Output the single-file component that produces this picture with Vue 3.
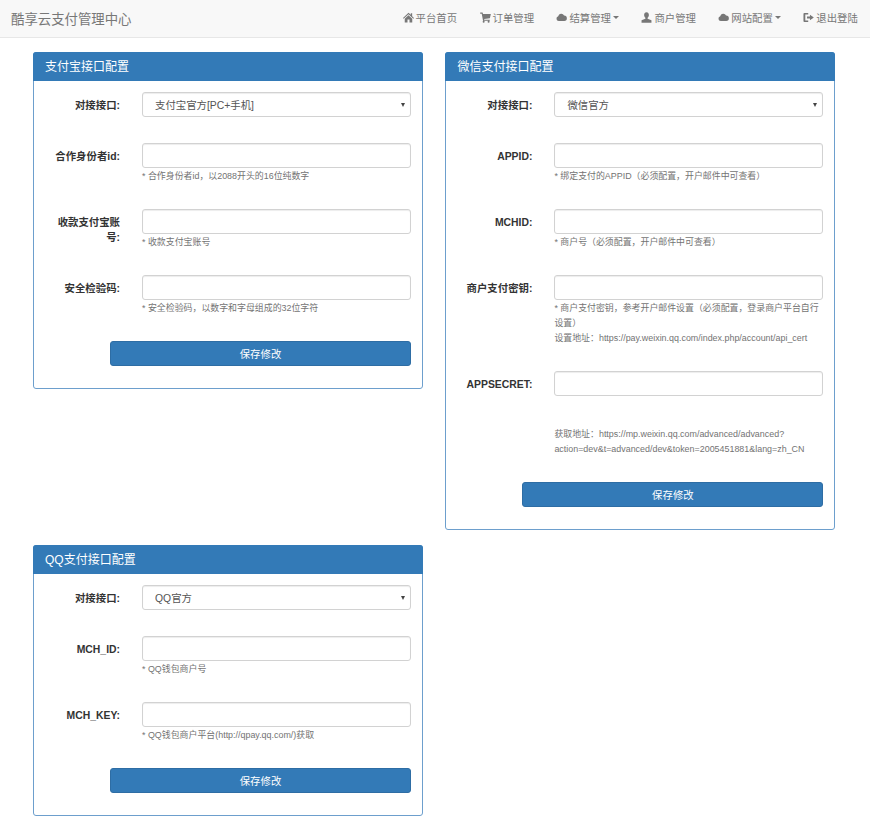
<script setup>
const navItems = [
  { text: '平台首页', icon: 'home' },
  { text: '订单管理', icon: 'cart' },
  { text: '结算管理', icon: 'cloud', caret: true },
  { text: '商户管理', icon: 'user' },
  { text: '网站配置', icon: 'cloud', caret: true },
  { text: '退出登陆', icon: 'logout' },
]

const panels = [
  {
    title: '支付宝接口配置',
    fields: [
      { label: '对接接口:', select: '支付宝官方[PC+手机]' },
      { label: '合作身份者id:', help: ['* 合作身份者id，以2088开头的16位纯数字'] },
      { label: '收款支付宝账号:', help: ['* 收款支付宝账号'] },
      { label: '安全检验码:', help: ['* 安全检验码，以数字和字母组成的32位字符'] },
    ],
  },
  {
    title: '微信支付接口配置',
    fields: [
      { label: '对接接口:', select: '微信官方' },
      { label: 'APPID:', help: ['* 绑定支付的APPID（必须配置，开户邮件中可查看）'] },
      { label: 'MCHID:', help: ['* 商户号（必须配置，开户邮件中可查看）'] },
      {
        label: '商户支付密钥:',
        help: [
          '* 商户支付密钥，参考开户邮件设置（必须配置，登录商户平台自行设置）',
          '设置地址：https://pay.weixin.qq.com/index.php/account/api_cert',
        ],
      },
      { label: 'APPSECRET:' },
      {
        spaced: true,
        help: ['获取地址：https://mp.weixin.qq.com/advanced/advanced?action=dev&t=advanced/dev&token=2005451881&lang=zh_CN'],
      },
    ],
  },
  {
    title: 'QQ支付接口配置',
    fields: [
      { label: '对接接口:', select: 'QQ官方' },
      { label: 'MCH_ID:', help: ['* QQ钱包商户号'] },
      { label: 'MCH_KEY:', help: ['* QQ钱包商户平台(http://qpay.qq.com/)获取'] },
    ],
  },
]
</script>

<template>
  <div class="page">
    <nav class="navbar">
      <span class="brand">酷享云支付管理中心</span>
      <ul class="nav">
        <li v-for="item in navItems" :key="item.text" class="nav-item">
          <svg class="icon" viewBox="0 0 12 12" aria-hidden="true">
            <path v-if="item.icon === 'home'" d="M6 .9 0 6.6l.7.8L6 2.5l5.3 4.9.7-.8-2-1.900V1.400H8.500v1.500zM1.900 7.400V11.500h3V8.300h2.200v3.200h3V7.400L6 3.600z" />
            <path v-else-if="item.icon === 'cart'" d="M.2.6h2.600l.5 1.500h8.500l-1 4.700-6.300.8.200.9h6v1H3.300L1.900 1.800H.2zM4 9.500a1.100 1.100 0 1 0 0 2.200 1.100 1.100 0 0 0 0-2.200zm5.400 0a1.100 1.100 0 1 0 0 2.200 1.100 1.100 0 0 0 0-2.200z" />
            <path v-else-if="item.icon === 'cloud'" d="M3 9.800A2.600 2.600 0 0 1 2.400 4.700 3.400 3.400 0 0 1 8.800 3.900 2.950 2.950 0 0 1 9 9.800z" />
            <path v-else-if="item.icon === 'user'" d="M6 .4c-1.700 0-2.600 1.300-2.600 3 0 1.200.5 2.400 1.400 3v1L.6 9v2.600h10.800V9L7.200 7.400v-1c.9-.6 1.400-1.800 1.400-3C8.600 1.700 7.700.4 6 .4z" />
            <path v-else d="M1.500 1.200h4.200v1.500H2.500v6.600h3.200v1.500H1.500a1 1 0 0 1-1-1V2.200a1 1 0 0 1 1-1zM7.600 3l4.200 3-4.200 3V7.200H4.400V4.800h3.200z" />
          </svg>
          <span>{{ item.text }}</span>
          <i v-if="item.caret" class="caret"></i>
        </li>
      </ul>
    </nav>

    <main class="grid">
      <section v-for="panel in panels" :key="panel.title" class="panel">
        <h3 class="panel-title">{{ panel.title }}</h3>
        <form class="panel-body" @submit.prevent>
          <div
            v-for="(field, index) in panel.fields"
            :key="index"
            class="form-group"
            :class="{ spaced: field.spaced }"
          >
            <label class="label">{{ field.label }}</label>
            <div class="control">
              <div v-if="field.select" class="select-wrap">
                <select class="input select">
                  <option>{{ field.select }}</option>
                </select>
              </div>
              <input v-else-if="field.label" class="input" type="text" />
              <p v-for="line in field.help" :key="line" class="help">{{ line }}</p>
            </div>
          </div>
          <button class="save" type="submit">保存修改</button>
        </form>
      </section>
    </main>
  </div>
</template>

<style>
html,
body {
  margin: 0;
  background: #fff;
}
</style>

<style scoped>
.page {
  font-family: "Liberation Sans", "Noto Sans CJK SC", sans-serif;
  font-size: 10.4px;
  color: #333;
}

.navbar {
  box-sizing: border-box;
  height: 38px;
  border-bottom: 1px solid #e7e7e7;
  background: #f8f8f8;
  display: flex;
  align-items: center;
  justify-content: space-between;
  padding: 0 1px 2px 11px;
}

.brand {
  font-size: 13.4px;
  color: #777;
}

.nav {
  display: flex;
  list-style: none;
  margin: 0;
  padding: 0;
}

.nav-item {
  display: flex;
  align-items: center;
  gap: 2px;
  padding: 0 11.2px;
  color: #777;
}

.icon {
  width: 11px;
  height: 11px;
  fill: #777;
  flex: none;
}

.caret {
  width: 0;
  height: 0;
  border-top: 3px solid #777;
  border-left: 3px solid transparent;
  border-right: 3px solid transparent;
}

.grid {
  display: grid;
  grid-template-columns: 390px 390px;
  column-gap: 22.4px;
  row-gap: 15px;
  align-items: start;
  padding: 14px 0 15px 33px;
}

.panel {
  box-sizing: border-box;
  border: 1px solid #6d9fcd;
  border-radius: 3px;
  background: #fff;
}

.panel-title {
  box-sizing: border-box;
  height: 29px;
  margin: -1px -1px 0;
  padding: 0 12px 3px;
  display: flex;
  align-items: center;
  border-radius: 3px 3px 0 0;
  background: #337ab7;
  color: #fff;
  font-size: 12px;
  font-weight: 400;
}

.panel-body {
  padding: 11px 11px 0;
}

.form-group {
  display: grid;
  grid-template-columns: 75px 269px;
  column-gap: 22px;
  margin-bottom: 25px;
}

.form-group.spaced {
  margin-top: 29.5px;
  margin-bottom: 25.5px;
}

.label {
  padding-top: 6px;
  font-weight: 700;
  line-height: 15px;
  text-align: right;
}

.input {
  display: block;
  box-sizing: border-box;
  width: 100%;
  height: 25px;
  margin-bottom: 1px;
  padding: 1px 9px 0;
  border: 1px solid #d2d2d2;
  border-radius: 3px;
  background: #fff;
  box-shadow: inset 0 1px 1px rgba(0, 0, 0, 0.075);
  color: #555;
  font: inherit;
}

.select {
  appearance: none;
  padding-left: 12px;
  color: #555;
}

.select-wrap {
  position: relative;
}

.select-wrap::after {
  content: "";
  position: absolute;
  top: 11px;
  right: 6px;
  border-top: 4px solid #444;
  border-left: 2.5px solid transparent;
  border-right: 2.5px solid transparent;
  pointer-events: none;
}

.help {
  margin: 0;
  font-size: 8.92px;
  line-height: 15px;
  color: #737373;
}

.save {
  display: block;
  box-sizing: border-box;
  width: 301px;
  height: 25px;
  margin: 0 0 22px 65px;
  border: 1px solid #2e6da4;
  border-radius: 3px;
  background: #337ab7;
  color: #fff;
  font: inherit;
}
</style>
